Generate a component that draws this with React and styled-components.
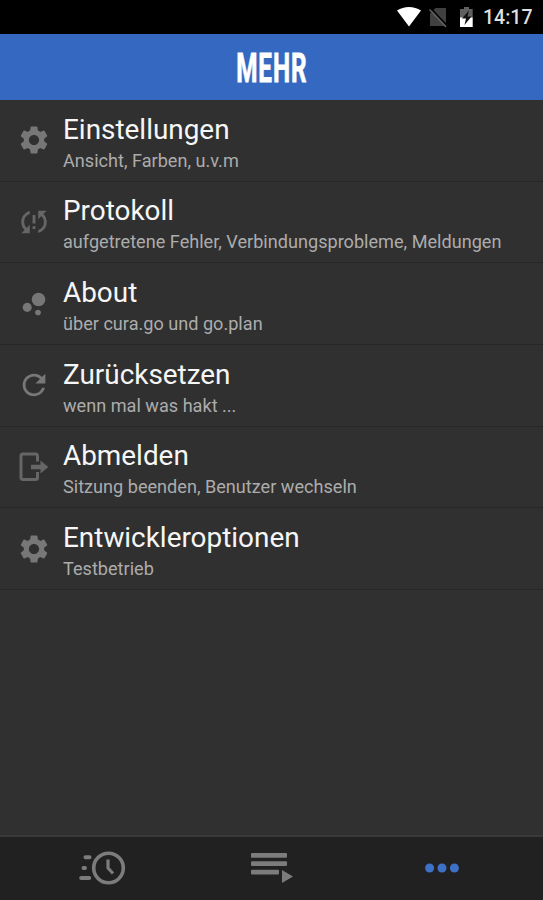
import React from 'react';
import styled, { createGlobalStyle } from 'styled-components';
import { MdSettings, MdSyncProblem, MdBubbleChart, MdRefresh } from 'react-icons/md';

const GlobalStyle = createGlobalStyle`
  body {
    margin: 0;
    background-color: #303030;
    font-family: Roboto, sans-serif;
  }
`;
const Screen = styled.div`
  display: flex;
  flex-direction: column;
  width: 543px;
  height: 900px;
  overflow: hidden;
  background-color: #303030;
`;
const StatusBar = styled.div`
  display: flex;
  align-items: center;
  justify-content: flex-end;
  height: 34px;
  padding-right: 11px;
  box-sizing: border-box;
  background-color: black;
`;
const Clock = styled.span`
  color: #dedede;
  font-size: 19.5px;
  font-weight: 500;
  line-height: 34px;
  width: 49px;
  margin-left: 7px;
  padding-top: 2px;
  white-space: nowrap;
`;
const Header = styled.header`
  display: flex;
  align-items: center;
  justify-content: center;
  height: 66px;
  background-color: #3569c1;
`;
const Title = styled.h1`
  margin: 0;
  padding-top: 1px;
  color: white;
  font-size: 41.5px;
  font-weight: 700;
  line-height: 66px;
  letter-spacing: 1.5px;
  white-space: nowrap;
  -webkit-text-stroke: 0.8px white;
  transform: scaleX(0.585);
`;
const List = styled.main`
  flex: 1;
`;
const Row = styled.div`
  display: flex;
  height: 81.7px;
  box-sizing: border-box;
  border-bottom: 1px solid #272727;
`;
const IconBox = styled.div`
  display: flex;
  justify-content: center;
  width: 34px;
  padding: 23.4px 12px 0 17px;
  color: ${({ $dim }) => ($dim ? '#666' : '#777')};
`;
const RowTitle = styled.div`
  color: #f6f6f6;
  font-size: 27.9px;
  line-height: 34px;
  padding-top: 12.7px;
  white-space: nowrap;
`;
const RowText = styled.div`
  color: #acacac;
  font-size: 18.13px;
  line-height: 22px;
  padding-top: 3px;
  white-space: nowrap;
`;
const TabBar = styled.nav`
  display: flex;
  height: 65px;
  padding: 0 16.5px;
  box-sizing: border-box;
  border-top: 2px solid #393939;
  background-color: #212121;
`;
const Tab = styled.div`
  display: flex;
  flex: 1;
  align-items: center;
  justify-content: center;
  padding-bottom: 1px;
  color: ${({ $active }) => ($active ? '#3d71c8' : '#7c7c7c')};
`;

const StatusIcons = () => (
  <svg width="80" height="24" viewBox="0 0 80 24" fill="none">
    <path d="M1 5.5C8 .7 18 .7 25 5.5L13 21.5Z" fill="#fff" />
    <path d="M39.500 3H50v18H34V8.500Z" fill="#404040" />
    <path d="m34.500 3 16 17" stroke="#000" strokeWidth="1.6" />
    <path d="m33.500 4.500 16.500 17.500" stroke="#606060" strokeWidth="1.5" />
    <path d="M68 2h5v2h3.700V13H64V4h4Z" fill="#606060" />
    <path d="M64 12.500h12.700V22H64Z" fill="#fff" />
    <path d="m73 5.500-7 8h4l-1.500 6.500 7-8.500h-4Z" fill="#111" />
  </svg>
);

const LogoutIcon = () => (
  <svg width="34" height="34" viewBox="0 0 34 34" fill="none">
    <path
      d="M20.500 11.500V6q0-2-2-2H6Q4 4 4 6v21.500q0 2 2 2h12.500q2 0 2-2V22"
      stroke="currentColor"
      strokeWidth="3"
    />
    <path d="M14 14.700h9.500v-4.200l7.800 6.500-7.800 6.500v-4.200H14Z" fill="currentColor" />
  </svg>
);

const RecentIcon = () => (
  <svg width="48" height="36" viewBox="0 0 48 36" fill="none" stroke="currentColor">
    <circle cx="30.500" cy="18" r="14.800" strokeWidth="3.600" />
    <path d="M30 9.500V18l5 5.500" strokeWidth="3.200" />
    <path d="M7.500 7.200h4M5.500 18h1.500M3.200 28h8" strokeWidth="4" strokeLinecap="round" />
  </svg>
);

const QueueIcon = () => (
  <svg width="42" height="34" viewBox="0 0 42 34" fill="currentColor">
    <rect x="0" y="2" width="36" height="4.800" rx="1" />
    <rect x="0" y="10.300" width="36" height="4.800" rx="1" />
    <rect x="0" y="18.700" width="28" height="4.800" rx="1" />
    <path d="M31 19v13l11-6.500Z" />
  </svg>
);

const MoreIcon = () => (
  <svg width="36" height="12" viewBox="0 0 36 12" fill="currentColor">
    <circle cx="5.600" cy="6" r="4.500" />
    <circle cx="18" cy="6" r="4.500" />
    <circle cx="30.400" cy="6" r="4.500" />
  </svg>
);

const entries = [
  { icon: <MdSettings size={34} />, title: 'Einstellungen', text: 'Ansicht, Farben, u.v.m' },
  {
    icon: <MdSyncProblem size={34} />,
    title: 'Protokoll',
    text: 'aufgetretene Fehler, Verbindungsprobleme, Meldungen',
    dim: true,
  },
  { icon: <MdBubbleChart size={34} />, title: 'About', text: 'über cura.go und go.plan' },
  { icon: <MdRefresh size={34} />, title: 'Zurücksetzen', text: 'wenn mal was hakt ...' },
  { icon: <LogoutIcon />, title: 'Abmelden', text: 'Sitzung beenden, Benutzer wechseln', dim: true },
  { icon: <MdSettings size={34} />, title: 'Entwickleroptionen', text: 'Testbetrieb' },
];

const App = () => {
  return (
    <Screen>
      <GlobalStyle />
      <StatusBar>
        <StatusIcons />
        <Clock>14:17</Clock>
      </StatusBar>
      <Header>
        <Title>MEHR</Title>
      </Header>
      <List>
        {entries.map(entry => (
          <Row key={entry.title}>
            <IconBox $dim={entry.dim}>{entry.icon}</IconBox>
            <div>
              <RowTitle>{entry.title}</RowTitle>
              <RowText>{entry.text}</RowText>
            </div>
          </Row>
        ))}
      </List>
      <TabBar>
        <Tab>
          <RecentIcon />
        </Tab>
        <Tab>
          <QueueIcon />
        </Tab>
        <Tab $active>
          <MoreIcon />
        </Tab>
      </TabBar>
    </Screen>
  );
};

export default App;
